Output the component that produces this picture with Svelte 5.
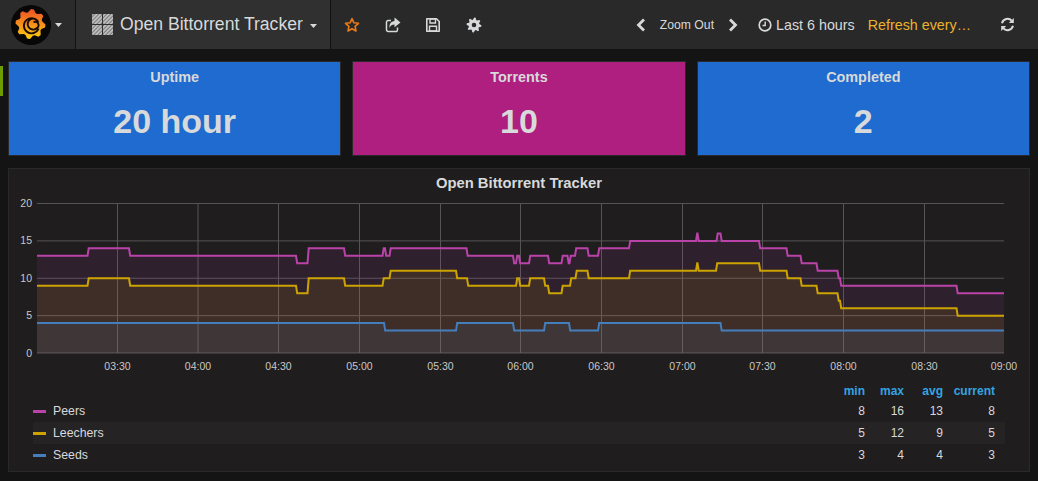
<script lang="ts">
  type Step = [number, number];

  const plot = { left: 37, right: 1004, top: 203.5, bottom: 353 };
  const yOf = (v: number) => plot.bottom - (v / 20) * (plot.bottom - plot.top);

  const series: { name: string; color: string; start: number; steps: Step[]; min: number; max: number; avg: number; current: number }[] = [
    {
      name: 'Peers', color: '#ba43a9', start: 13, min: 8, max: 16, avg: 13, current: 8,
      steps: [[87.5, 14], [129, 13], [296, 12], [307.5, 14], [344, 13], [382.5, 14], [385, 13], [389.5, 14], [466.5, 13], [513, 12], [516, 13], [519, 12], [529, 13], [548, 12], [561.5, 13], [567.5, 12], [569.5, 13], [575, 14], [587.5, 13], [598, 14], [629, 15], [696, 16], [697.5, 15], [716.5, 16], [720.5, 15], [759, 14], [786.5, 13], [800.5, 12], [816.5, 11], [837.5, 10], [840, 9], [956.5, 8]],
    },
    {
      name: 'Leechers', color: '#cca300', start: 9, min: 5, max: 12, avg: 9, current: 5,
      steps: [[87.5, 10], [129, 9], [296, 8], [307.5, 10], [344, 9], [382.5, 10], [389.5, 11], [456, 10], [467, 9], [516, 10], [519, 9], [529, 10], [544, 9], [548, 8], [561.5, 9], [570, 10], [575.5, 11], [587.5, 10], [629, 11], [696, 12], [697.5, 11], [716, 12], [759, 11], [786.5, 10], [800.5, 9], [816.5, 8], [837.5, 7], [840, 6], [956.5, 5]],
    },
    {
      name: 'Seeds', color: '#447ebc', start: 4, min: 3, max: 4, avg: 4, current: 3,
      steps: [[384, 3], [456, 4], [513, 3], [544, 4], [569, 3], [598, 4], [720.5, 3]],
    },
  ];

  function linePath(start: number, steps: Step[]): string {
    let d = `M${plot.left} ${yOf(start)}`;
    let prev = start;
    for (const [x, v] of steps) {
      d += ` L${x} ${yOf(prev)} L${x + 1.2} ${yOf(v)}`;
      prev = v;
    }
    return d + ` L${plot.right} ${yOf(prev)}`;
  }

  const areaPath = (line: string) => `${line} L${plot.right} ${plot.bottom} L${plot.left} ${plot.bottom} Z`;

  const yTicks = [0, 5, 10, 15, 20];
  const xTicks = [
    ['03:30', 117.5], ['04:00', 198], ['04:30', 278.5], ['05:00', 359.5], ['05:30', 440.5], ['06:00', 520.5],
    ['06:30', 601.5], ['07:00', 682.5], ['07:30', 762.5], ['08:00', 843.5], ['08:30', 924.5], ['09:00', 1004],
  ] as [string, number][];

  const stats = [
    { title: 'Uptime', value: '20 hour', tone: 'blue' },
    { title: 'Torrents', value: '10', tone: 'magenta' },
    { title: 'Completed', value: '2', tone: 'blue' },
  ];

  // gear outline for the logo
  function gearPath(cx: number, cy: number, teeth: number, inner: number, outer: number): string {
    const pts: string[] = [];
    for (let i = 0; i < teeth; i++) {
      const a = (i / teeth) * Math.PI * 2 - 0.2;
      const w = (Math.PI * 2) / teeth;
      for (const [off, r] of [[0, inner], [w * 0.3, outer], [w * 0.55, outer], [w * 0.8, inner]] as [number, number][]) {
        pts.push(`${(cx + Math.cos(a + off) * r).toFixed(1)} ${(cy + Math.sin(a + off) * r).toFixed(1)}`);
      }
    }
    return `M${pts.join(' L')} Z`;
  }
</script>

<div class="page">
  <span class="alert-bar"></span>

  <nav class="navbar">
    <div class="brand">
      <svg class="logo" width="40" height="40" viewBox="11 4 40 40" aria-hidden="true">
        <defs>
          <linearGradient id="gear" x1="0" y1="0" x2="0" y2="1">
            <stop offset="0" stop-color="#ee4f27" />
            <stop offset="1" stop-color="#fcd00c" />
          </linearGradient>
        </defs>
        <circle cx="31" cy="24" r="20" fill="#070707" />
        <path d={gearPath(30.5, 23, 8, 12, 15)} fill="url(#gear)" />
        <path d="M38.6 27.5A7.6 7.6 0 1 1 38.4 21.5A5.5 5.5 0 1 0 37 27A2.800 2.800 0 0 0 33.500 21.300" fill="none" stroke="#1a0c04" stroke-width="1.900" />
      </svg>
      <svg class="caret" width="7" height="4" viewBox="0 0 7 4" aria-hidden="true"><path d="M0 0h7L3.5 4z" /></svg>
    </div>

    <div class="title">
      <svg class="grid-icon" width="22" height="22" viewBox="0 0 22 22" aria-hidden="true">
        <defs>
          <pattern id="hatch" width="2.800" height="2.800" patternUnits="userSpaceOnUse" patternTransform="rotate(45)">
            <rect width="2.800" height="2.800" fill="#7e7e7e" />
            <rect width="1.400" height="2.800" fill="#d0d0d0" />
          </pattern>
        </defs>
        <rect x="0" y="0" width="10" height="10" rx="1" fill="url(#hatch)" />
        <rect x="11" y="0" width="10" height="10" rx="1" fill="url(#hatch)" />
        <rect x="0" y="11" width="10" height="10" rx="1" fill="url(#hatch)" />
        <rect x="11" y="11" width="10" height="10" rx="1" fill="url(#hatch)" />
      </svg>
      <span>Open Bittorrent Tracker</span>
      <svg class="caret" width="7" height="4" viewBox="0 0 7 4" aria-hidden="true"><path d="M0 0h7L3.5 4z" /></svg>
    </div>

    <div class="tools">
      <button type="button" aria-label="Star">
        <svg width="16" height="16" viewBox="0 0 16 16"><path d="M8 1.600l1.900 4.200 4.600.5-3.400 3.100.9 4.600L8 11.700 4 14l.9-4.600-3.400-3.100 4.600-.5z" fill="none" stroke="#eb7b18" stroke-width="1.600" stroke-linejoin="round" /></svg>
      </button>
      <button type="button" aria-label="Share">
        <svg width="16" height="16" viewBox="0 0 16 16"><path d="M12.500 10.500V12.500A1.700 1.700 0 0 1 10.800 14.500H3.200A1.700 1.700 0 0 1 1.500 12.800V5.200A1.700 1.700 0 0 1 3.200 3.500H6" fill="none" stroke="#d8d9da" stroke-width="1.500" /><path d="M9.500 0.500l6 4.900-6 4.900V7.600C7.200 7.600 5.500 8.300 4.500 11c-.4-4.300 1.600-6.800 5-7.100z" fill="#d8d9da" /></svg>
      </button>
      <button type="button" aria-label="Save">
        <svg width="16" height="16" viewBox="0 0 16 16"><path d="M1.800 1.800h9.700l2.700 2.700v9.700H1.800z" fill="none" stroke="#d8d9da" stroke-width="1.600" stroke-linejoin="round" /><path d="M5 2h5.500v4H5zM4.500 9.200h7V14h-7z" fill="none" stroke="#d8d9da" stroke-width="1.400" /></svg>
      </button>
      <button type="button" aria-label="Settings">
        <svg width="16" height="16" viewBox="0 0 16 16"><path fill-rule="evenodd" fill="#d8d9da" d={gearPath(8, 8, 8, 5.400, 7.400) + ' M8 5.700a2.300 2.300 0 1 0 0 4.600a2.300 2.300 0 1 0 0-4.600z'} /></svg>
      </button>
    </div>

    <div class="time">
      <svg class="chev" width="10" height="14" viewBox="0 0 10 14" aria-hidden="true"><path d="M8 1.500L2.500 7 8 12.500" /></svg>
      <span class="zoom">Zoom Out</span>
      <svg class="chev" width="10" height="14" viewBox="0 0 10 14" aria-hidden="true"><path d="M2 1.500L7.500 7 2 12.500" /></svg>
      <span class="range">
        <svg width="14" height="14" viewBox="0 0 14 14" aria-hidden="true"><circle cx="7" cy="7" r="5.800" fill="none" stroke="#d8d9da" stroke-width="1.700" /><path d="M7.200 3.500v4H4.500" fill="none" stroke="#d8d9da" stroke-width="1.400" /></svg>
        Last 6 hours
      </span>
      <span class="refresh-label">Refresh every…</span>
      <svg class="sync" width="15" height="15" viewBox="0 0 15 15" aria-hidden="true">
        <path d="M2 6.200A5.700 5.700 0 0 1 11.800 3.800" fill="none" stroke="#d8d9da" stroke-width="2" />
        <path d="M13.800 1v5h-5z" fill="#d8d9da" />
        <path d="M13 8.800A5.700 5.700 0 0 1 3.200 11.200" fill="none" stroke="#d8d9da" stroke-width="2" />
        <path d="M1.200 14V9h5z" fill="#d8d9da" />
      </svg>
    </div>
  </nav>

  <section class="stats">
    {#each stats as s (s.title)}
      <div class="stat {s.tone}">
        <h4>{s.title}</h4>
        <strong>{s.value}</strong>
      </div>
    {/each}
  </section>

  <section class="graph">
    <h3>Open Bittorrent Tracker</h3>
    <svg class="chart" width="1020" height="192" viewBox="9 190 1020 192">
      {#each yTicks as t}
        <line class="grid" x1={plot.left} x2={plot.right} y1={yOf(t)} y2={yOf(t)} />
        <text class="tick" x="32" y={yOf(t) + 3.500} text-anchor="end">{t}</text>
      {/each}
      {#each xTicks as [label, x]}
        {#if label !== '09:00'}
          <line class="grid" x1={x} x2={x} y1={plot.top} y2={plot.bottom} />
        {/if}
        <text class="tick" x={x} y="370" text-anchor="middle">{label}</text>
      {/each}
      {#each series as s (s.name)}
        <path d={areaPath(linePath(s.start, s.steps))} fill={s.color} fill-opacity="0.11" />
      {/each}
      {#each series as s (s.name)}
        <path d={linePath(s.start, s.steps)} fill="none" stroke={s.color} stroke-width="2" />
      {/each}
    </svg>

    <div class="legend">
      <div class="row head">
        <span></span><span></span>
        <span>min</span><span>max</span><span>avg</span><span>current</span>
      </div>
      {#each series as s (s.name)}
        <div class="row">
          <i style="background: {s.color}"></i>
          <span class="name">{s.name}</span>
          <span>{s.min}</span><span>{s.max}</span><span>{s.avg}</span><span>{s.current}</span>
        </div>
      {/each}
    </div>
  </section>
</div>

<style>
  :global(body) {
    background: #141414;
  }

  .page {
    position: relative;
    height: 481px;
    overflow: hidden;
    font-family: "Liberation Sans", Arial, sans-serif;
    color: #d8d9da;
  }

  .alert-bar {
    position: absolute;
    left: 0;
    top: 66px;
    width: 3px;
    height: 30px;
    background: #6f9d00;
  }

  .navbar {
    display: flex;
    align-items: stretch;
    height: 49px;
    background: #292929;
  }

  .brand {
    display: flex;
    align-items: center;
    gap: 4px;
    width: 76px;
    padding-left: 11px;
    box-sizing: border-box;
    border-right: 1px solid #111;
    background: #2b2b2b;
  }

  .caret path {
    fill: #d8d9da;
  }

  .title {
    display: flex;
    align-items: center;
    width: 255px;
    box-sizing: border-box;
    padding-left: 16px;
    font-size: 17.600px;
    background: #303030;
    border-right: 1px solid #111;
  }

  .grid-icon {
    margin-right: 6px;
  }

  .title .caret {
    margin-left: 7px;
    margin-top: 3px;
  }

  .tools {
    display: flex;
    align-items: center;
    gap: 24.500px;
    padding-left: 13px;
  }

  button {
    display: flex;
    padding: 0;
    border: 0;
    background: none;
  }

  .time {
    display: flex;
    align-items: center;
    margin-left: auto;
    padding-right: 23px;
    font-size: 14.300px;
  }

  .chev path {
    fill: none;
    stroke: #d8d9da;
    stroke-width: 2.800;
  }

  .zoom {
    margin: 0 14px;
    font-size: 12.200px;
  }

  .range {
    display: flex;
    align-items: center;
    gap: 4px;
    margin: 0 13px 0 20px;
  }

  .refresh-label {
    color: #ecb22e;
    font-size: 14.300px;
    margin-right: 29px;
  }

  .stats {
    display: flex;
    gap: 11px;
    margin-top: 12px;
    padding: 0 8px;
  }

  .stat {
    flex: 1;
    height: 95px;
    box-sizing: border-box;
    border: 1px solid #292929;
    text-align: center;
  }

  .stat.blue {
    background: #1f6bcf;
  }

  .stat.magenta {
    background: #ae1f7f;
  }

  .stat h4 {
    margin: 7px 0 0;
    font-size: 14.400px;
    line-height: 17px;
    font-weight: 700;
  }

  .stat strong {
    display: block;
    margin-top: 13px;
    font-size: 34px;
    line-height: 44px;
  }

  .graph {
    margin: 12px 8px 0;
    height: 304px;
    box-sizing: border-box;
    border: 1px solid #292929;
    background: #1f1d1e;
  }

  h3 {
    margin: 0;
    height: 21px;
    padding-top: 6px;
    box-sizing: border-box;
    line-height: 17px;
    font-size: 14.800px;
    font-weight: 700;
    text-align: center;
  }

  .chart {
    display: block;
  }

  .grid {
    stroke: #565454;
    stroke-width: 1;
  }

  .tick {
    fill: #c8c8c8;
    font-size: 10.500px;
  }

  .legend {
    margin: 0 24px 0 24px;
    font-size: 12px;
  }

  .row {
    display: grid;
    grid-template-columns: 13px 1fr 40px 39px 39px 52px;
    align-items: center;
    height: 22px;
    padding-right: 10px;
    text-align: right;
  }

  .row i {
    height: 3px;
    margin-top: 1px;
  }

  .row .name {
    padding-left: 7px;
    text-align: left;
    font-size: 12.300px;
  }

  .row:nth-child(3) {
    background: #252324;
  }

  .head {
    height: 18px;
    font-weight: 700;
    color: #33a4e0;
  }
</style>
